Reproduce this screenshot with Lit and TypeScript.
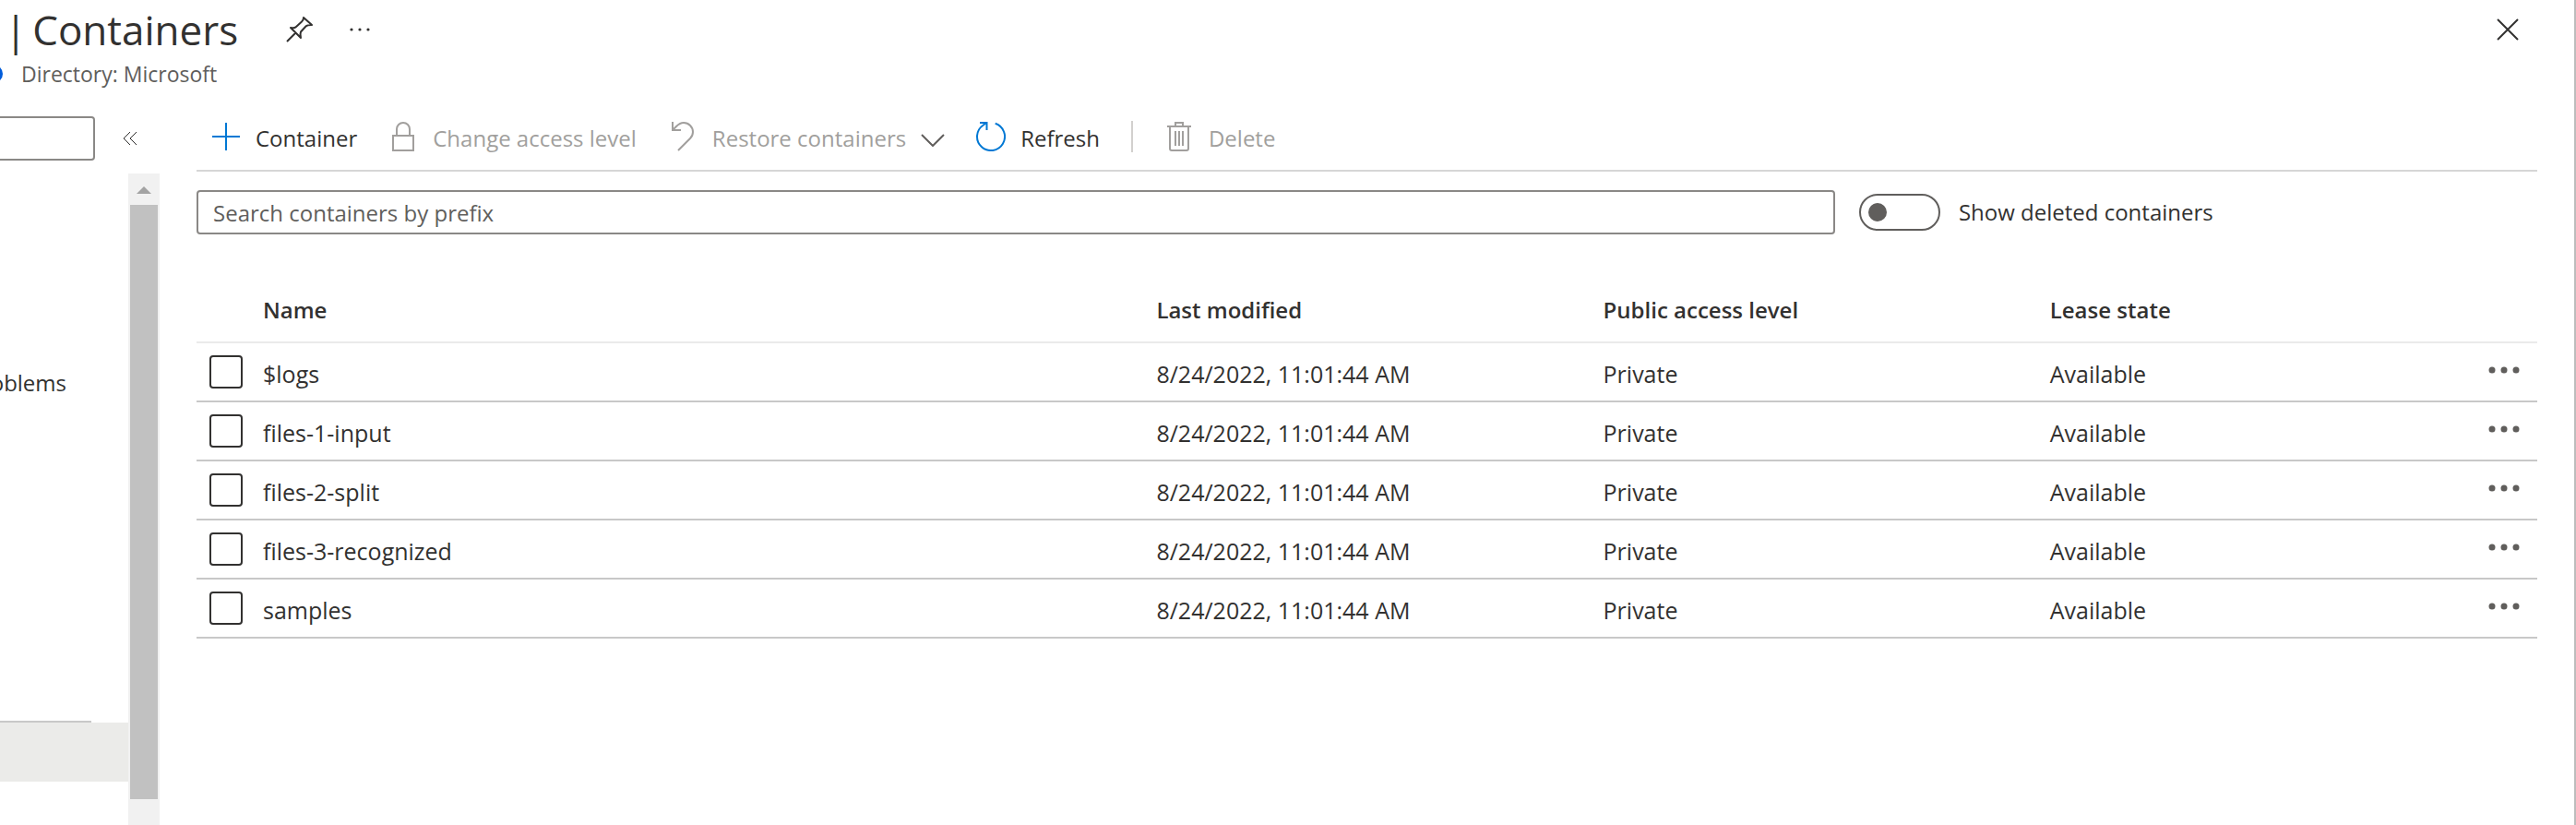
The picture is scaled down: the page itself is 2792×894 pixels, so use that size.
import { LitElement, html, css, svg, nothing } from "lit";
import { customElement, property, state } from "lit/decorators.js";

interface ContainerItem {
  name: string;
  modified: string;
  access: string;
  lease: string;
}

const MODIFIED = "8/24/2022, 11:01:44 AM";

const CONTAINERS: ContainerItem[] = [
  "$logs",
  "files-1-input",
  "files-2-split",
  "files-3-recognized",
  "samples",
].map((name) => ({ name, modified: MODIFIED, access: "Private", lease: "Available" }));

const ICONS = {
  add: svg`<path d="M16 1v30M1 16h30" stroke="#0078d4" />`,
  lock: svg`<path d="M5 15h22v16H5zM9 15V8a7 7 0 0 1 14 0v7" stroke="#a19f9d" />`,
  undo: svg`<path d="M5 0v9h9M5 9l4-4c2-2 4-4 8-4a10 10 0 0 1 10 10c0 3-1 5-3 7L11 31" stroke="#a19f9d" />`,
  refresh: svg`<path d="M20.7 1.8A15 15 0 1 1 7.5 3.7L11 1M4 1h7.5v8" stroke="#0078d4" />`,
  trash: svg`<path d="M3 5h26M12 5V1h8v4M6 5v24q0 2 2 2h16q2 0 2-2V5M12 10v16M16 10v16M20 10v16" stroke="#a19f9d" />`,
};

@customElement("command-button")
class CommandButton extends LitElement {
  @property() icon: keyof typeof ICONS = "add";
  @property() label = "";
  @property({ type: Boolean }) disabled = false;
  @property({ type: Boolean }) menu = false;

  static styles = css`
    :host {
      display: block;
    }
    .command {
      display: flex;
      align-items: center;
      gap: 16px;
      height: 72px;
      padding: 0;
      border: 0;
      background: none;
      color: #323130;
      font: inherit;
      white-space: nowrap;
      cursor: pointer;
    }
    .command:disabled {
      color: #a19f9d;
      cursor: default;
    }
    .label {
      padding-top: 4px;
    }
    .icon,
    .chevron {
      flex: none;
      fill: none;
      stroke-width: 2;
    }
    .chevron {
      margin-top: 8px;
      stroke: #605e5c;
    }
  `;

  render() {
    return html`<button class="command" ?disabled=${this.disabled}>
      <svg class="icon" width="32" height="32" viewBox="0 0 32 32" aria-hidden="true">${ICONS[this.icon]}</svg>
      <span class="label">${this.label}</span>
      ${this.menu
        ? html`<svg class="chevron" width="26" height="14" viewBox="0 0 26 14" aria-hidden="true">
            <path d="M1 1l12 12L25 1" />
          </svg>`
        : nothing}
    </button>`;
  }
}

@customElement("side-panel")
class SidePanel extends LitElement {
  static styles = css`
    :host {
      display: grid;
      grid-template-rows: auto 1fr;
      overflow: hidden;
    }
    .top {
      display: flex;
      align-items: center;
      gap: 30px;
      padding: 14px 0;
    }
    .filter {
      box-sizing: border-box;
      width: 103px;
      height: 48px;
      border: 2px solid #8a8886;
      border-left: 0;
      border-radius: 0 4px 4px 0;
      background: #fff;
      font: inherit;
      outline: none;
    }
    .collapse {
      display: flex;
      padding: 0;
      border: 0;
      background: none;
    }
    .collapse path {
      fill: none;
      stroke: #323130;
    }
    .scroll {
      display: grid;
      grid-template-columns: 1fr 34px;
    }
    .nav {
      display: flex;
      flex-direction: column;
      padding-top: 195px;
    }
    .link {
      display: flex;
      justify-content: flex-end;
      align-items: center;
      width: 72px;
      height: 64px;
      color: #323130;
      text-decoration: none;
    }
    .group {
      width: 99px;
      height: 2px;
      margin-top: 334px;
      background: #c8c8c8;
    }
    .selected {
      height: 64px;
      background: #ebebe9;
    }
    .track {
      display: flex;
      flex-direction: column;
      align-items: center;
      padding: 14px 2px 28px;
      background: #f1f1f1;
    }
    .arrow {
      fill: #a3a3a3;
    }
    .thumb {
      flex: 1;
      align-self: stretch;
      margin-top: 12px;
      background: #c1c1c1;
    }
  `;

  render() {
    return html`
      <div class="top">
        <input class="filter" type="text" aria-label="Search menu" />
        <button class="collapse" aria-label="Collapse menu">
          <svg width="16" height="16" viewBox="0 0 16 16"><path d="M8 1L1 8l7 7M15 1L8 8l7 7" /></svg>
        </button>
      </div>
      <div class="scroll">
        <nav class="nav">
          <a class="link" href="#">oblems</a>
          <div class="group"></div>
          <div class="selected"></div>
        </nav>
        <div class="track">
          <svg class="arrow" width="16" height="8" viewBox="0 0 16 8"><path d="M8 0l8 8H0z" /></svg>
          <div class="thumb"></div>
        </div>
      </div>
    `;
  }
}

@customElement("container-table")
class ContainerTable extends LitElement {
  @property({ attribute: false }) items: ContainerItem[] = [];

  static styles = css`
    :host {
      display: block;
    }
    .table {
      width: 100%;
      table-layout: fixed;
      border-collapse: separate;
      border-spacing: 0;
      color: #323130;
    }
    .pick {
      width: 72px;
    }
    .more {
      width: 44px;
    }
    th,
    td {
      height: 62px;
      padding: 0;
      text-align: left;
      vertical-align: middle;
      border-bottom: 2px solid #c8c8c8;
    }
    th {
      height: 60px;
      padding-bottom: 4px;
      font-weight: 600;
      border-bottom-color: #eaeaea;
    }
    .text {
      display: block;
      padding-top: 4px;
      font-size: 25px;
    }
    .check {
      display: block;
      box-sizing: border-box;
      appearance: none;
      width: 36px;
      height: 36px;
      margin: 0 0 0 14px;
      border: 2px solid #323130;
      border-radius: 4px;
      background: #fff;
    }
    .check:checked {
      background: #0078d4;
    }
    .actions {
      display: flex;
      justify-content: flex-end;
      padding: 0 19px 4px 0;
    }
    .dots {
      display: flex;
      flex: none;
      padding: 0;
      border: 0;
      background: none;
      fill: #605e5c;
    }
  `;

  render() {
    return html`<table class="table">
      <colgroup>
        <col class="pick" />
        <col /><col /><col /><col /><col />
        <col class="more" />
      </colgroup>
      <thead>
        <tr>
          <th></th>
          <th colspan="2">Name</th>
          <th>Last modified</th>
          <th>Public access level</th>
          <th>Lease state</th>
          <th></th>
        </tr>
      </thead>
      <tbody>
        ${this.items.map(
          (item) => html`<tr>
            <td><input class="check" type="checkbox" aria-label=${`Select ${item.name}`} /></td>
            <td colspan="2"><span class="text">${item.name}</span></td>
            <td><span class="text">${item.modified}</span></td>
            <td><span class="text">${item.access}</span></td>
            <td><span class="text">${item.lease}</span></td>
            <td>
              <div class="actions">
                <button class="dots" aria-label=${`More actions for ${item.name}`}>
                  <svg width="34" height="8" viewBox="0 0 34 8">
                    <circle cx="4" cy="4" r="3.5" /><circle cx="17" cy="4" r="3.5" /><circle cx="30" cy="4" r="3.5" />
                  </svg>
                </button>
              </div>
            </td>
          </tr>`
        )}
      </tbody>
    </table>`;
  }
}

@customElement("app-root")
class AppRoot extends LitElement {
  @state() private showDeleted = false;

  static styles = css`
    :host {
      display: grid;
      grid-template-rows: 112px 1fr;
      box-sizing: border-box;
      min-height: 100vh;
      border-right: 2px solid #bcbcbc;
      background: #fff;
      color: #323130;
      font-family: "Open Sans", "Noto Sans", sans-serif;
      font-size: 24px;
      line-height: 32px;
      overflow: hidden;
    }
    .header {
      display: flex;
      justify-content: space-between;
      align-items: flex-start;
      padding-right: 60px;
    }
    .title-row {
      display: flex;
      align-items: center;
      height: 64px;
      padding-left: 5px;
    }
    .title {
      display: flex;
      gap: 6px;
      margin: 0;
      font-size: 44px;
      font-weight: 400;
      line-height: 60px;
    }
    .icon-button {
      display: flex;
      padding: 0;
      border: 0;
      background: none;
      fill: none;
      stroke: #323130;
      stroke-width: 2;
    }
    .pin {
      margin-left: 52px;
    }
    .ellipsis {
      margin-left: 38px;
      fill: #323130;
      stroke: none;
    }
    .close {
      margin-top: 20px;
    }
    .directory {
      display: flex;
      align-items: center;
      gap: 20px;
      color: #605e5c;
      font-size: 23px;
    }
    .badge {
      width: 3px;
      height: 18px;
      fill: #015cda;
    }
    .body {
      display: grid;
      grid-template-columns: 173px minmax(0, 1fr);
    }
    .main {
      padding: 0 40px;
    }
    .toolbar {
      display: flex;
      align-items: center;
      gap: 34px;
      padding-left: 16px;
      border-bottom: 2px solid #d6d6d6;
    }
    .separator {
      width: 2px;
      height: 34px;
      background: #d2d0ce;
    }
    .filters {
      display: grid;
      grid-template-columns: 70% auto;
      justify-content: start;
      align-items: center;
      gap: 26px;
      padding: 20px 0 52px;
    }
    .search {
      box-sizing: border-box;
      width: 100%;
      height: 48px;
      padding: 0 16px;
      border: 2px solid #8a8886;
      border-radius: 4px;
      color: #323130;
      font: inherit;
      outline: none;
    }
    .search::placeholder {
      color: #605e5c;
      opacity: 1;
    }
    .toggle {
      display: flex;
      align-items: center;
      gap: 20px;
    }
    .switch {
      display: flex;
      align-items: center;
      box-sizing: border-box;
      appearance: none;
      width: 88px;
      height: 40px;
      margin: 0;
      padding: 0 8px;
      border: 2px solid #605e5c;
      border-radius: 20px;
    }
    .switch::before {
      content: "";
      width: 20px;
      height: 20px;
      border-radius: 50%;
      background: #605e5c;
    }
    .switch:checked {
      justify-content: flex-end;
    }
  `;

  render() {
    return html`
      <header class="header">
        <div>
          <div class="title-row">
            <h1 class="title"><span>|</span> <span>Containers</span></h1>
            <button class="icon-button pin" aria-label="Pin">
              <svg width="30" height="30" viewBox="0 0 30 30">
                <path
                  d="M19 2l9 8q-5 0-6.500 1.500l-5.500 6q-1 2 0 6.500L5 13q4 1 6-1l6-5.500Q19 5 19 2zM10.500 18.500L1 28"
                  stroke-linejoin="round"
                />
              </svg>
            </button>
            <button class="icon-button ellipsis" aria-label="More">
              <svg width="24" height="4" viewBox="0 0 24 4">
                <circle cx="3" cy="2" r="1.6" /><circle cx="12" cy="2" r="1.6" /><circle cx="21" cy="2" r="1.6" />
              </svg>
            </button>
          </div>
          <div class="directory">
            <svg class="badge" viewBox="0 0 3 18"><circle cx="-7" cy="9" r="10" /></svg>
            <span>Directory: Microsoft</span>
          </div>
        </div>
        <button class="icon-button close" aria-label="Close">
          <svg width="24" height="24" viewBox="0 0 24 24"><path d="M1 1l22 22M23 1L1 23" /></svg>
        </button>
      </header>
      <div class="body">
        <side-panel></side-panel>
        <main class="main">
          <div class="toolbar">
            <command-button icon="add" label="Container"></command-button>
            <command-button icon="lock" label="Change access level" disabled></command-button>
            <command-button icon="undo" label="Restore containers" disabled menu></command-button>
            <command-button icon="refresh" label="Refresh"></command-button>
            <div class="separator"></div>
            <command-button icon="trash" label="Delete" disabled></command-button>
          </div>
          <div class="filters">
            <input class="search" type="text" placeholder="Search containers by prefix" aria-label="Search containers by prefix" />
            <label class="toggle">
              <input
                class="switch"
                type="checkbox"
                role="switch"
                .checked=${this.showDeleted}
                @change=${(e: Event) => (this.showDeleted = (e.target as HTMLInputElement).checked)}
              />
              <span>Show deleted containers</span>
            </label>
          </div>
          <container-table .items=${CONTAINERS}></container-table>
        </main>
      </div>
    `;
  }
}
